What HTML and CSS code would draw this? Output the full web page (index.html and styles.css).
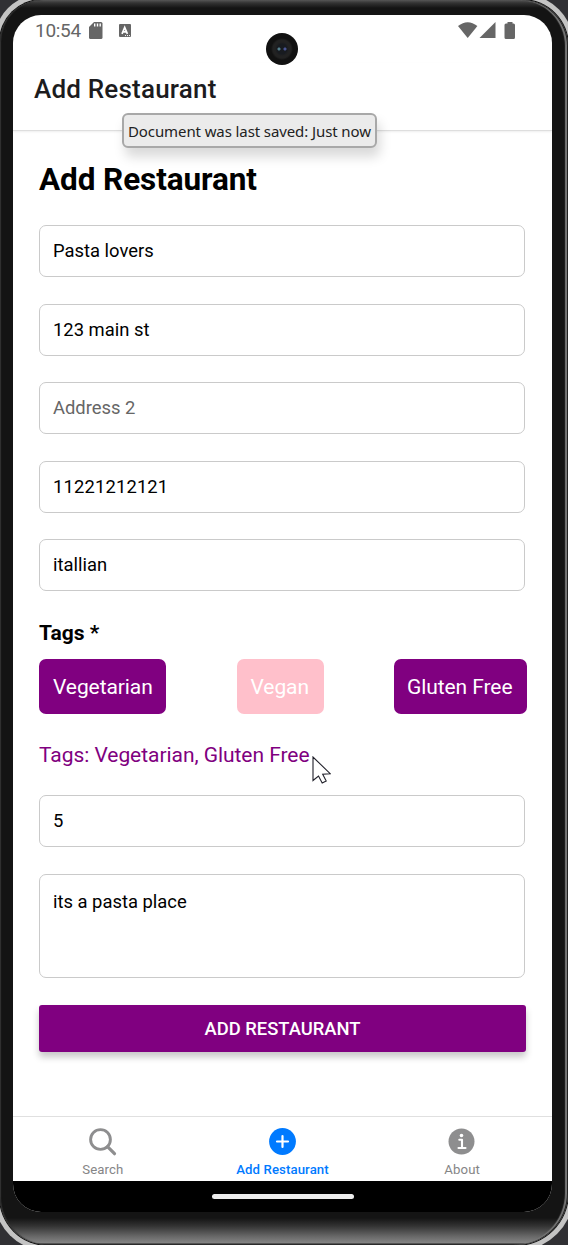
FILE: index.html
```html
<!DOCTYPE html>
<html lang="en">
<head>
<meta charset="utf-8">
<title>Add Restaurant</title>
<link rel="stylesheet" href="styles.css">
</head>
<body>
<div class="desktop">
<div class="phone">
<main class="screen">
  <div class="statusbar">
    <span class="clock">10:54</span>
    <svg class="sd" width="14" height="17" viewBox="0 0 14 17"><path fill="#666" d="M5 0h7q1.500 0 1.500 1.500v14q0 1.500-1.500 1.500h-10.500q-1.500 0-1.500-1.500v-10.500z"/><path stroke="#fff" stroke-width="1.400" d="M5.700 1.500v3M8.500 1.500v3M11.200 1.500v3"/></svg>
    <svg class="lang" width="12" height="13" viewBox="0 0 12 13"><rect width="12" height="13" rx="1" fill="#666"/><path fill="none" stroke="#fff" stroke-width="1.700" d="M3 9.800L5.700 3.500L8.400 9.800M4 7.800h3.500"/><path stroke="#fff" d="M6 11.600h1M8 11.600h1M10 11.600h1"/></svg>
    <svg class="signals" width="58" height="17" viewBox="0 0 58 17" fill="#666"><path d="M0 4Q9.700-3.600 19.400 4L9.700 16z"/><path d="M37.500 0v16H21.500z"/><path d="M49.500 0h5v1.500h1q1.500 0 1.500 1.500v12.500q0 1.500-1.500 1.500h-7.500q-1.500 0-1.500-1.500v-12.500q0-1.500 1.500-1.500h1.500z"/></svg>
    <span class="camera"></span>
  </div>
  <header class="appbar">Add Restaurant</header>
  <div class="tooltip">Document was last saved: Just now</div>
  <section class="form">
    <h1 class="title">Add Restaurant</h1>
    <div class="field">Pasta lovers</div>
    <div class="field">123 main st</div>
    <div class="field placeholder">Address 2</div>
    <div class="field phoneno">11221212121</div>
    <div class="field">itallian</div>
    <h2 class="label">Tags *</h2>
    <div class="tags">
      <div class="tag veg">Vegetarian</div>
      <div class="tag vegan">Vegan</div>
      <div class="tag gluten">Gluten Free</div>
    </div>
    <p class="summary"><span class="summarytext">Tags: Vegetarian, Gluten Free</span><svg class="cursor" width="19" height="28" viewBox="0 0 19 28"><path fill="#fff" stroke="#20202a" stroke-width="1.100" d="M1 1v23.500l5.500-4.500 3.700 7 4-2-3.500-6.800 7.500-.5z"/></svg></p>
    <div class="field">5</div>
    <div class="field area">its a pasta place</div>
    <div class="submit">ADD RESTAURANT</div>
  </section>
  <nav class="tabs">
    <div class="tab"><svg width="28" height="28" viewBox="0 0 28 28" fill="none" stroke="#8e8e8f"><circle cx="11.500" cy="11.500" r="9.900" stroke-width="2.900"/><path d="M18.500 18.700l7 7" stroke-width="3.200" stroke-linecap="round"/></svg><span class="tabname search">Search</span></div>
    <div class="tab active"><svg width="28" height="28" viewBox="0 0 28 28"><circle cx="13.500" cy="13.500" r="13.400" fill="#007aff"/><path d="M13.500 8v11M8 13.500h11" stroke="#fff" stroke-width="2.200" stroke-linecap="round"/></svg><span class="tabname add">Add Restaurant</span></div>
    <div class="tab"><svg width="28" height="28" viewBox="0 0 28 28"><circle cx="13.500" cy="13.500" r="13" fill="#8e8e8f"/><circle cx="13.500" cy="7.500" r="1.800" fill="#fff"/><path d="M11.300 11.800h2.700v8M10.500 20h7" fill="none" stroke="#fff" stroke-width="2.100" stroke-linecap="round" stroke-linejoin="round"/></svg><span class="tabname about">About</span></div>
  </nav>
  <div class="gesture"><span class="handle"></span></div>
</main>
</div>
</div>
</body>
</html>
```
FILE: styles.css
```css
* { box-sizing: border-box; }
body { margin: 0; font-family: Roboto, "Liberation Sans", sans-serif; }
.desktop { width: 568px; height: 1245px; overflow: hidden; background: #303034; }
.phone {
  height: 1245px;
  padding: 15px 16px 33px 13px;
  border-radius: 42px 46px 52px 48px;
  background: linear-gradient(#555 0, #333 3px, #141414 8px, #141414 1218px, #333 1226px, #666 1236px, #858585 1243px, #222 1244px);
  box-shadow: inset -1px 0 0 #222, inset -3px 0 1px #777, inset 1px 0 1px #333, 0 0 0 1px #111, 0 0 0 6px #c4c4c4;
}
.screen { display: flex; flex-direction: column; height: 1197px; border-radius: 28px; overflow: hidden; background: #fff; }
.statusbar { position: relative; display: flex; height: 48px; padding: 7px 36px 0 22px; }
.clock { width: 54px; font-size: 19px; line-height: 18px; letter-spacing: -.3px; color: #666; white-space: nowrap; }
.sd { margin-top: 0; }
.lang { margin: 2px 0 0 16px; }
.signals { margin-left: auto; }
.camera {
  position: absolute; left: 253px; top: 18px; width: 32px; height: 32px; border-radius: 50%;
  background: radial-gradient(circle at 13px 16px, #54808c 0 1px, transparent 2px), radial-gradient(circle at 19px 16px, #4b5696 0 1px, transparent 2px), radial-gradient(circle, #181b20 0 5px, #222 7px 9px, #111 11px);
}
.appbar { flex: none; height: 68px; padding: 10px 21px; border-bottom: 1px solid #dedede; box-shadow: 0 1px 2px #eee; font-size: 26px; line-height: 32px; font-weight: 500; letter-spacing: .2px; color: #1c1c1e; white-space: nowrap; }
.tooltip {
  position: absolute; left: 122px; top: 113px; width: 255px; height: 35px;
  padding: 0 4px; border: 2px solid #a8a8a8; border-radius: 6px; background: #ebebeb;
  box-shadow: 3px 9px 12px rgba(0,0,0,.15);
  font: 15px/33px "Noto Sans", "Open Sans", sans-serif; letter-spacing: -.1px; color: #222; white-space: nowrap;
}
.form { display: flex; flex-direction: column; flex: 1; padding: 29px 26px 0; }
.title { margin: 0 0 26px; height: 39px; font-size: 31.500px; line-height: 39px; font-weight: 700; letter-spacing: -.1px; color: #000; }
.field { flex: none; width: 486px; height: 52px; margin-bottom: 26.600px; padding: 0 13px; border: 1.500px solid #cacaca; border-radius: 7px; font-size: 18.400px; line-height: 49px; color: #000; }
.placeholder { color: #666; }
.phoneno { letter-spacing: .15px; }
.label { margin: 2px 0 13px; font-size: 21px; line-height: 26px; color: #000; }
.tags { display: flex; justify-content: space-between; width: 488px; height: 55px; }
.tag { padding: 0 13px 0 14px; border-radius: 7px; font-size: 21px; line-height: 57px; letter-spacing: -.08px; color: #fff; background: purple; white-space: nowrap; }
.veg { width: 127px; }
.vegan { width: 87px; background: #ffc0cb; }
.gluten { width: 133px; padding-left: 13px; }
.summary { position: relative; margin: 28px 0 27px; font-size: 21px; line-height: 26px; letter-spacing: -.05px; color: purple; }
.cursor { position: absolute; left: 273px; top: 14px; }
.area { height: 104.500px; line-height: 53px; }
.submit { width: 487px; height: 47px; border-radius: 3px; background: purple; box-shadow: 0 5px 7px rgba(0,0,0,.22); font-size: 18.400px; line-height: 48px; font-weight: 500; text-align: center; color: #fff; }
.tabs { flex: none; display: flex; height: 65px; border-top: 1px solid #e0e0e0; }
.tab { flex: 1; display: flex; flex-direction: column; align-items: center; padding-top: 11px; color: #858586; }
.active { color: #007aff; }
.tabname { margin-top: 5px; font-size: 13.200px; line-height: 18px; font-weight: 500; letter-spacing: .1px; white-space: nowrap; }
.search, .about { font-weight: 400; }
.gesture { flex: none; display: flex; justify-content: center; height: 31px; padding-top: 13px; background: #000; }
.handle { width: 142px; height: 5px; border-radius: 3px; background: #ededed; }
```
